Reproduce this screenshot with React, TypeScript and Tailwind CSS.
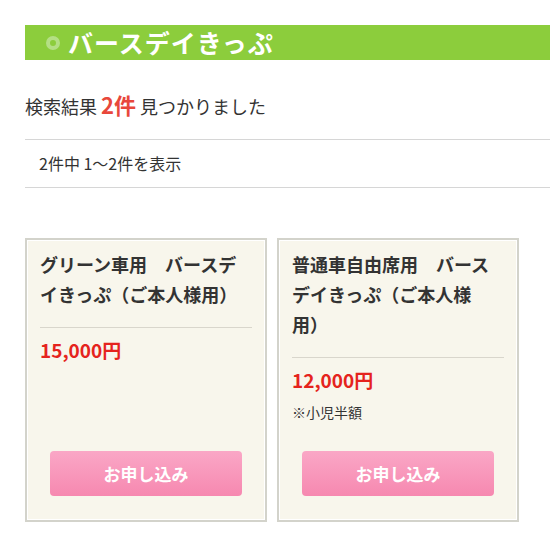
import React from 'react';

type Ticket = {
  lines: string[];
  price: string;
  note?: string;
};

const tickets: Ticket[] = [
  { lines: ['グリーン車用　バースデ', 'イきっぷ（ご本人様用）'], price: '15,000円' },
  { lines: ['普通車自由席用　バース', 'デイきっぷ（ご本人様', '用）'], price: '12,000円', note: '※小児半額' },
];

const font = { fontFamily: '"Noto Sans CJK JP", "Noto Sans", sans-serif' };

const TicketCard: React.FC<{ ticket: Ticket }> = ({ ticket }) => (
  <div className="w-[242px] border-2 border-[#d3d3cb] bg-white p-px">
    <div className="flex h-full flex-col bg-[#f8f6ec] px-[12px] pt-[8px] pb-[23px]">
      {/* Title */}
      <h2 className="text-[18px] font-bold leading-[30px] text-[#333]">
        {ticket.lines.map((l, i) => (
          <span key={i} className="block">{l}</span>
        ))}
      </h2>
      <div className="mt-[18px] h-px bg-[#d9d6cc]" />

      {/* Price */}
      <p className="mt-[10px] text-[19px] font-bold leading-[24px] text-[#e5231d]">{ticket.price}</p>
      {ticket.note && (
        <p className="mt-[10px] text-[14px] leading-[20px] text-[#333]">{ticket.note}</p>
      )}

      {/* Apply button */}
      <div className="mt-auto flex justify-center pt-[29px]">
        <button className="h-[45px] w-[192px] rounded-[4px] bg-gradient-to-b from-[#faa7c6] to-[#f688b0] text-[17px] font-bold text-white">
          お申し込み
        </button>
      </div>
    </div>
  </div>
);

export default function App() {
  return (
    <div className="min-h-[556px] bg-white pl-[25px] text-[#333]" style={font}>
      {/* Page heading */}
      <div className="mt-[25px] flex h-[35px] items-center bg-[#8ccd3c] pl-[21px]">
        <span className="h-[14px] w-[14px] rounded-full border-[4px] border-[#b4df84]" />
        <h1 className="ml-[8px] text-[25px] font-bold leading-none tracking-[1px] text-white">バースデイきっぷ</h1>
      </div>

      {/* Result count */}
      <p className="mt-[32px] text-[18px] leading-[24px]">
        検索結果 <span className="text-[22px] font-bold text-[#e8473b]">2件</span> 見つかりました
      </p>

      <div className="mt-[21px] border-y border-[#d6d6d6] py-[12px] pl-[14px] text-[16px] leading-[23px]">
        2件中 1〜2件を表示
      </div>

      {/* Ticket list */}
      <div className="mt-[50px] flex items-stretch gap-[10px]">
        {tickets.map((t) => (
          <TicketCard key={t.price} ticket={t} />
        ))}
      </div>
    </div>
  );
}
